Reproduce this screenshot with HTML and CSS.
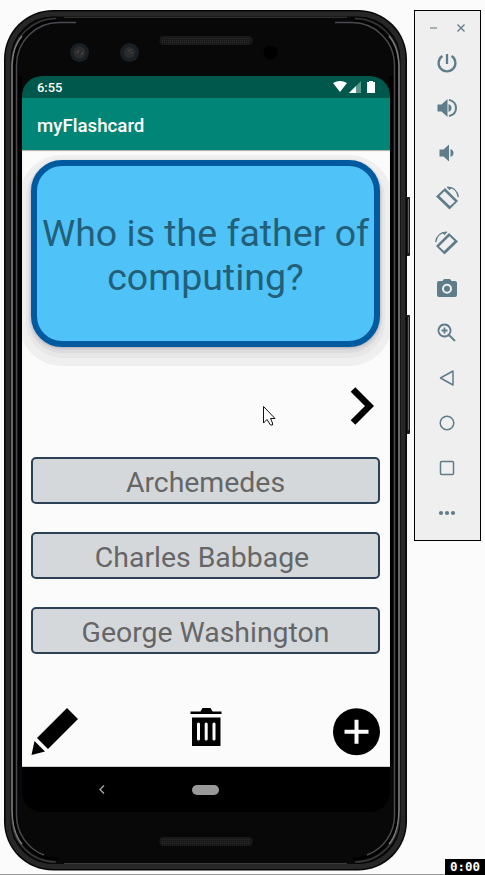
FILE: index.html
```html
<!DOCTYPE html>
<html lang="en">
<head>
<meta charset="utf-8">
<title>myFlashcard</title>
<link rel="stylesheet" href="styles.css">
</head>
<body>
<main class="desktop">
  <section class="phone">
    <svg class="frame" width="408" height="862" viewBox="0 0 408 862" fill="none">
      <rect x="402" y="187" width="4" height="59" rx="1" fill="#1c1c1c"/>
      <rect x="402" y="305" width="4" height="119" rx="1" fill="#1c1c1c"/>
      <path d="M404.500 307v113M404.500 189v54" stroke="#606060"/>
      <rect x="0" y="0" width="403" height="860.500" rx="49" fill="#050505"/>
      <rect x="4" y="4" width="395" height="852.500" rx="45" stroke="#272727" stroke-width="5"/>
      <rect x="7" y="7" width="389" height="847" rx="42" fill="#080808"/>
      <path d="M60 7.300H343M60 853.500H343" stroke="#3a3a3a"/>
      <path d="M52 8.500A44 44 0 0 0 8 52V808A44 44 0 0 0 52 852M351 8.500A44 44 0 0 1 395 52V808A44 44 0 0 1 351 852" stroke="#383838" stroke-width="1.500"/>
      <path d="M8 800V55Q9 36 18 26M395 800V55Q394 36 385 26M8 800Q9 824 18 834M395 800Q394 824 385 834" stroke="#7b7b7b" stroke-width="1.500"/>
      <path d="M54 11A43.500 43.500 0 0 0 10.500 54V806A43.500 43.500 0 0 0 54 849M349 11A43.500 43.500 0 0 1 392.500 54V806A43.500 43.500 0 0 1 349 849" stroke="#000" stroke-width="2.500"/>
      <path d="M72 12.500H55A42.500 42.500 0 0 0 12.500 55V805A42.500 42.500 0 0 0 40 845M331 12.500H348A42.500 42.500 0 0 1 390.500 55V805A42.500 42.500 0 0 1 363 845" stroke="#4a4a50" stroke-width="1.500"/>
      <path d="M16 66V756M387 66V756" stroke="#000" stroke-width="4"/>
      <g fill="#1a1f23"><circle cx="75.500" cy="42.500" r="9.500"/><circle cx="125.500" cy="42.500" r="9.500"/></g>
      <g fill="#2b2c2e"><circle cx="75.500" cy="42.500" r="6"/><circle cx="125.500" cy="42.500" r="5.500"/></g>
      <path d="M73 43l2-3M77 45l2-3M124.500 41l2-1.500M127 43l1-1" stroke="#555"/>
      <circle cx="266.500" cy="42.500" r="7" fill="#000"/>
      <rect x="155.500" y="26" width="93" height="9" rx="4" fill="#191919"/>
      <path d="M158 28.500h88M158 30.500h88M158 32.500h88" stroke="#2b2b2b" stroke-dasharray="1 1"/>
      <rect x="155.500" y="827" width="93" height="9" rx="4" fill="#191919"/>
      <path d="M158 829.500h88M158 831.500h88M158 833.500h88" stroke="#2b2b2b" stroke-dasharray="1 1"/>
    </svg>
    <div class="screen">
      <header class="status">
        <span>6:55</span>
        <svg width="43" height="14" viewBox="0 0 43 14">
          <path d="M0 3Q7-1 14 3L7 12Z" fill="#fff"/>
          <path d="M16 13L28 1V13Z" fill="#5b988c"/>
          <path d="M16 13L23 6V13Z" fill="#fff"/>
          <path d="M34 2h2V1h4v1h2v11h-8Z" fill="#fff"/>
        </svg>
      </header>
      <h1 class="appbar">myFlashcard</h1>
      <div class="content">
        <div class="card">Who is the father of<br>computing?</div>
        <svg class="next" width="24" height="38" viewBox="0 0 24 38"><path d="M3 2.500L19.500 19 3 35.500" fill="none" stroke="#000" stroke-width="6.500"/></svg>
        <div class="choices">
          <div class="choice">Archemedes</div>
          <div class="choice babbage">Charles Babbage</div>
          <div class="choice">George Washington</div>
        </div>
        <div class="actions">
          <svg width="48" height="48" viewBox="0 0 48 48"><path d="M36 0L47 11 17 41 6 30ZM3.500 33L14 43.500 0.500 47Z"/></svg>
          <svg width="32" height="48" viewBox="0 0 32 48">
            <path d="M.5 3.500h10L12.500 0h8l2 3.500h9V6H.5ZM2 9.500h28.500V38H2Z"/>
            <path d="M8.500 16v15M16.200 16v15M24 16v15" stroke="#fbfbfb" stroke-width="3" stroke-linecap="round"/>
          </svg>
          <svg width="48" height="48" viewBox="0 0 48 48"><circle cx="24.500" cy="23.700" r="23.500"/><path d="M12.500 23.700h24M24.500 11.700v24" stroke="#fbfbfb" stroke-width="4"/></svg>
        </div>
      </div>
      <nav class="navbar">
        <svg width="6" height="9" viewBox="0 0 6 9"><path d="M5 .5L1 4.500l4 4" fill="none" stroke="#aaa" stroke-width="1.300"/></svg>
        <span class="home"></span>
      </nav>
    </div>
  </section>
  <aside class="tools">
    <div class="window-buttons">
      <svg width="9" height="10" viewBox="0 0 9 10"><path d="M1 5h7" stroke="#9aa6ab" stroke-width="1.700"/></svg>
      <svg width="10" height="10" viewBox="0 0 10 10"><path d="M1.500 1.500l7 7M8.500 1.500l-7 7" stroke="#627d89" stroke-width="1.400"/></svg>
    </div>
    <svg class="tool" viewBox="0 0 24 24"><path d="M12 3v10M7.400 5a8.400 8.400 0 1 0 9.200 0" fill="none" stroke="#5f7c8a" stroke-width="2.300"/></svg>
    <svg class="tool" viewBox="0 0 24 24"><path d="M2.500 8.500v7h4l6 5.500V3l-6 5.500ZM13.500 8v8q3-1.200 3-4t-3-4"/><path d="M14 3.900q7 1.700 7 8.100t-7 8.100" fill="none" stroke="#5f7c8a" stroke-width="2"/></svg>
    <svg class="tool" viewBox="0 0 24 24"><path d="M4.500 8.500v7h4l5.500 5V3.500l-5.500 5ZM15.500 8v8q3-1.200 3-4t-3-4"/></svg>
    <svg class="tool" viewBox="0 0 24 24"><path d="M10 2L1 10.500 14.500 23.500 23 15Z"/><path d="M9.500 5.200L20 15.500 15 20 4.500 10Z" fill="#efefef"/><path d="M12.500 1.200q9.500.5 10.800 10" fill="none" stroke="#5f7c8a" stroke-width="1.300"/><path d="M11.500.8l5.500.4-2.500 3Z"/></svg>
    <svg class="tool" viewBox="0 0 24 24"><path d="M14 2l9 8.500L9.500 23.500 1 15Z"/><path d="M14.500 5.200L4 15.500 9 20 19.500 10Z" fill="#efefef"/><path d="M11.500 1.200q-9.500.5-10.800 10" fill="none" stroke="#5f7c8a" stroke-width="1.300"/><path d="M12.500.8L7 1.200l2.500 3Z"/></svg>
    <svg class="tool" viewBox="0 0 24 24"><path d="M4 5h3.500l1.500-2h6l1.500 2H20q2 0 2 2v12q0 2-2 2H4q-2 0-2-2V7q0-2 2-2Z"/><circle cx="12" cy="12.800" r="4" fill="none" stroke="#efefef" stroke-width="2"/></svg>
    <svg class="tool" viewBox="0 0 24 24"><path d="M9.500 3.500a6 6 0 1 0 .01 0M14 14l6 6M9.500 6.500v6M6.500 9.500h6" fill="none" stroke="#5f7c8a" stroke-width="1.800"/></svg>
    <svg class="tool" viewBox="0 0 24 24"><path d="M18 5v14L5.500 12Z" fill="none" stroke="#5f7c8a" stroke-width="1.500" stroke-linejoin="round"/></svg>
    <svg class="tool" viewBox="0 0 24 24"><circle cx="12" cy="12" r="6.800" fill="none" stroke="#5f7c8a" stroke-width="1.500"/></svg>
    <svg class="tool" viewBox="0 0 24 24"><rect x="5.500" y="5.500" width="13" height="13" rx="1" fill="none" stroke="#5f7c8a" stroke-width="1.500"/></svg>
    <svg class="tool" viewBox="0 0 24 24"><circle cx="6" cy="12" r="2.100"/><circle cx="12" cy="12" r="2.100"/><circle cx="18" cy="12" r="2.100"/></svg>
  </aside>
</main>
<svg class="cursor" width="13" height="20" viewBox="0 0 13 20"><path d="M.5.500V17L4 13.500 7.500 19h2V17L7.500 12.500H12Z" fill="#fff" stroke="#111"/></svg>
<div class="baseline"></div>
<div class="timer">0:00</div>
</body>
</html>
```

FILE: styles.css
```css
* { box-sizing: border-box; }

body {
  margin: 0;
  height: 875px;
  overflow: hidden;
  position: relative;
  background: #fbfbfb;
  font-family: Roboto, sans-serif;
}

svg { display: block; flex: none; }

.desktop {
  display: flex;
  align-items: flex-start;
  gap: 7px;
  padding: 10px 4px 0;
}

.phone {
  position: relative;
  width: 403px;
  height: 861px;
  padding: 66px 17px 49px 18px;
}

.frame { position: absolute; left: 0; top: 0; }

.screen {
  position: relative;
  height: 736px;
  display: flex;
  flex-direction: column;
  overflow: hidden;
  border-radius: 20px;
  background: #000;
}

.status {
  flex: none;
  height: 22px;
  padding: 0 14px 0 15px;
  display: flex;
  align-items: center;
  justify-content: space-between;
  background: #00574b;
  color: #fff;
  font-size: 12.9px;
  font-weight: 500;
}

.appbar {
  flex: none;
  height: 52px;
  margin: 0;
  padding: 2px 15px 0;
  line-height: 52px;
  background: #008577;
  color: #fff;
  font-size: 18.7px;
  font-weight: 500;
}

.content {
  flex: none;
  height: 617px;
  padding: 10px 10px 0 9px;
  display: flex;
  flex-direction: column;
  overflow: hidden;
  background: #fbfbfb;
  border-bottom: 1px solid #ccc;
  box-shadow: inset 0 1px 1px #ababab;
}

.card {
  flex: none;
  height: 187px;
  padding-top: 45px;
  border: 6px solid #005a9f;
  border-radius: 31px;
  background: #4fc3f7;
  color: #235f79;
  font-size: 37.5px;
  line-height: 44px;
  text-align: center;
  white-space: nowrap;
  box-shadow: 0 1px 3px #a9abb2, 0 4px 0 2px #dcdce0, 0 6px 0 5px #e7e7e8, 0 7px 0 12px #efefef;
}

.next { align-self: flex-end; margin: 40px 6px 32px; }

.choices { display: flex; flex-direction: column; gap: 28px; }

.choice {
  height: 47px;
  padding-top: 1px;
  border: 2px solid #2c4056;
  border-radius: 5px;
  background: #d4d8db;
  color: #666;
  font-size: 28.4px;
  line-height: 45px;
  text-align: center;
}

.babbage { padding-right: 7px; }

.actions {
  margin-top: 54px;
  display: flex;
  justify-content: space-between;
}

.navbar {
  height: 45px;
  padding-left: 77px;
  display: flex;
  align-items: center;
  gap: 87px;
}

.home { width: 27px; height: 10px; border-radius: 5px; background: #999; }

.tools {
  width: 67px;
  height: 531px;
  border: 1px solid #000;
  background: #efefef;
  display: flex;
  flex-direction: column;
  align-items: center;
}

.window-buttons {
  flex: none;
  height: 29px;
  margin-top: 1px;
  padding-top: 11px;
  display: flex;
  gap: 18px;
}

.tool {
  width: 24px;
  height: 24px;
  margin: 0 1px 21px 0;
  fill: #5f7c8a;
}

.window-buttons + .tool { margin-top: 10px; }

.cursor { position: absolute; left: 263px; top: 406px; }

.baseline {
  position: absolute;
  inset: auto 0 0;
  height: 1px;
  background: #999;
}

.timer {
  position: absolute;
  right: 0;
  bottom: 0;
  width: 40px;
  height: 16px;
  background: #000;
  color: #fff;
  font: bold 12.5px/16px "DejaVu Sans Mono", monospace;
  text-align: center;
}
```
